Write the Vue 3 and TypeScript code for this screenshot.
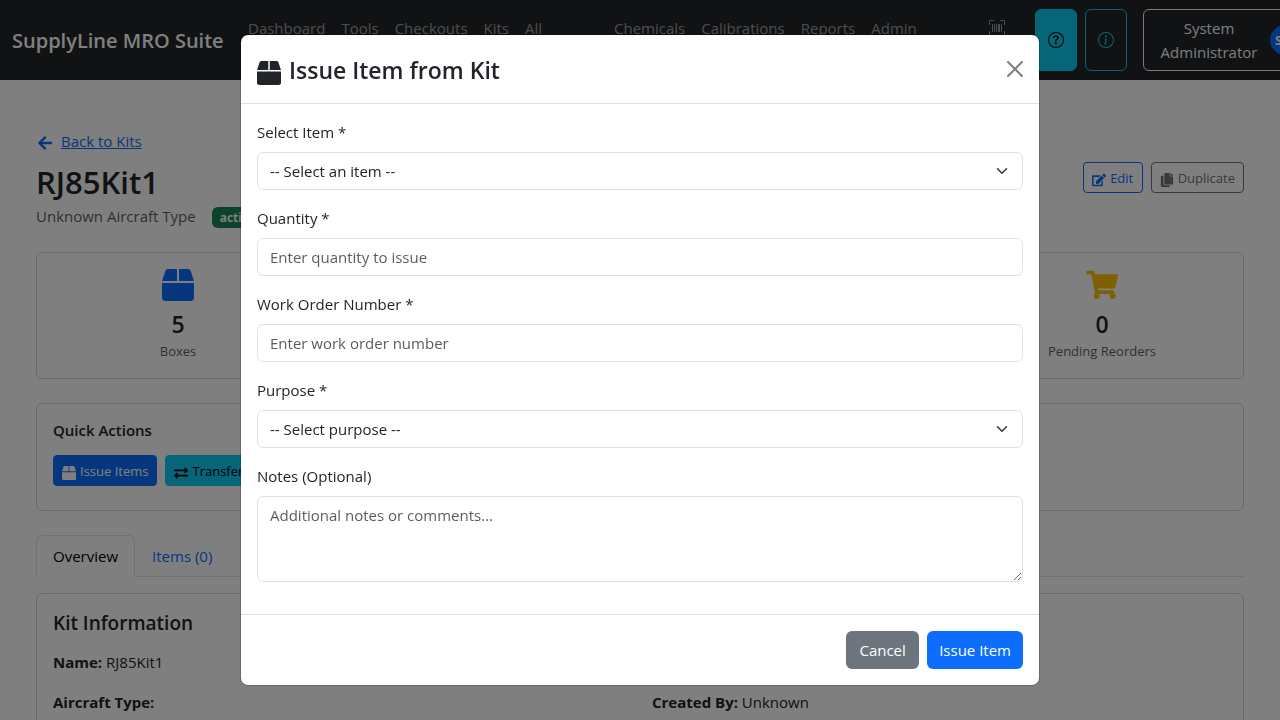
<script setup lang="ts">
import { ref } from 'vue'

interface Stat {
  value: number
  label: string
  icon: string
  box: string
  tone: string
}

const icons = {
  box: 'M509.5 184.6L458.9 32.8C452.4 13.2 434.1 0 413.4 0H272v192h238.7c-.4-2.5-.4-5-1.2-7.4zM240 0H98.6c-20.7 0-39 13.2-45.5 32.8L2.5 184.6c-.8 2.4-.8 4.9-1.2 7.4H240V0zM0 224v240c0 26.5 21.5 48 48 48h416c26.5 0 48-21.5 48-48V224H0z',
  arrow: 'M257.5 445.1l-22.2 22.2c-9.4 9.4-24.6 9.4-33.9 0L7 273c-9.4-9.4-9.4-24.6 0-33.9L201.4 44.7c9.4-9.4 24.6-9.4 33.9 0l22.2 22.2c9.5 9.5 9.3 25-.4 34.3L136.6 216H424c13.3 0 24 10.7 24 24v32c0 13.3-10.7 24-24 24H136.6l120.5 114.8c9.8 9.3 10 24.8.4 34.3z',
  edit: 'M402.6 83.2l90.2 90.2c3.8 3.8 3.8 10 0 13.8L274.4 405.6l-92.8 10.3c-12.4 1.4-22.9-9.1-21.5-21.5l10.3-92.8L388.8 83.2c3.8-3.8 10-3.8 13.8 0zm162-22.9l-48.8-48.8c-15.2-15.2-39.9-15.2-55.2 0l-35.4 35.4c-3.8 3.8-3.8 10 0 13.8l90.2 90.2c3.8 3.8 10 3.8 13.8 0l35.4-35.4c15.2-15.3 15.2-40 0-55.2zM384 346.2V448H64V128h229.8c3.2 0 6.2-1.3 8.5-3.5l40-40c7.6-7.6 2.2-20.5-8.5-20.5H48C21.5 64 0 85.5 0 112v352c0 26.5 21.5 48 48 48h352c26.5 0 48-21.5 48-48V306.2c0-10.7-12.9-16-20.5-8.5l-40 40c-2.2 2.3-3.5 5.3-3.5 8.5z',
  copy: 'M320 448v40c0 13.255-10.745 24-24 24H24c-13.255 0-24-10.745-24-24V120c0-13.255 10.745-24 24-24h72v296c0 30.879 25.121 56 56 56h168zm0-344V0H152c-13.255 0-24 10.745-24 24v368c0 13.255 10.745 24 24 24h272c13.255 0 24-10.745 24-24V128H344c-13.2 0-24-10.8-24-24zm120.971-31.029L375.029 7.029A24 24 0 0 0 358.059 0H352v96h96v-6.059a24 24 0 0 0-7.029-16.97z',
  cart: 'M528.12 301.319l47.273-208C578.806 78.301 567.391 64 551.99 64H159.208l-9.166-44.81C147.758 8.021 137.93 0 126.529 0H24C10.745 0 0 10.745 0 24v16c0 13.255 10.745 24 24 24h69.883l70.248 343.435C147.325 417.1 136 435.222 136 456c0 30.928 25.072 56 56 56s56-25.072 56-56c0-15.674-6.447-29.835-16.824-40h209.647C430.447 426.165 424 440.326 424 456c0 30.928 25.072 56 56 56s56-25.072 56-56c0-22.172-12.888-41.332-31.579-50.405l5.517-24.276c3.413-15.018-8.002-29.319-23.403-29.319H218.117l-6.545-32h293.145c11.206 0 20.92-7.754 23.403-18.681z',
  exchange: 'M0 168v-16c0-13.255 10.745-24 24-24h360V80c0-21.367 25.899-32.042 40.971-16.971l80 80c9.372 9.373 9.372 24.569 0 33.941l-80 80C409.956 271.982 384 261.456 384 240v-48H24c-13.255 0-24-10.745-24-24zm488 152H128v-48c0-21.314-25.862-32.08-40.971-16.971l-80 80c-9.372 9.373-9.372 24.569 0 33.941l80 80C102.057 463.997 128 453.437 128 432v-48h360c13.255 0 24-10.745 24-24v-16c0-13.255-10.745-24-24-24z',
  ring: 'M8 15A7 7 0 1 1 8 1a7 7 0 0 1 0 14m0 1A8 8 0 1 0 8 0a8 8 0 0 0 0 16',
  question: 'M5.255 5.786a.237.237 0 0 0 .241.247h.825c.138 0 .248-.113.266-.25.09-.656.54-1.134 1.342-1.134.686 0 1.314.343 1.314 1.168 0 .635-.374.927-.965 1.371-.673.489-1.206 1.06-1.168 1.987l.003.217a.25.25 0 0 0 .25.246h.811a.25.25 0 0 0 .25-.25v-.105c0-.718.273-.927 1.01-1.486.609-.463 1.244-.977 1.244-2.056 0-1.511-1.276-2.241-2.673-2.241-1.267 0-2.655.59-2.75 2.286m1.557 5.763c0 .533.425.927 1.01.927.609 0 1.028-.394 1.028-.927 0-.552-.42-.94-1.029-.94-.584 0-1.009.388-1.009.94',
  info: 'm8.93 6.588-2.29.287-.082.38.45.083c.294.07.352.176.288.469l-.738 3.468c-.194.897.105 1.319.808 1.319.545 0 1.178-.252 1.465-.598l.088-.416c-.2.176-.492.246-.686.246-.275 0-.375-.193-.304-.533zM9 4.5a1 1 0 1 1-2 0 1 1 0 0 1 2 0',
  scan: 'M1.5 1a.5.5 0 0 0-.5.5v3a.5.5 0 0 1-1 0v-3A1.5 1.5 0 0 1 1.5 0h3a.5.5 0 0 1 0 1zM11 .5a.5.5 0 0 1 .5-.5h3A1.5 1.5 0 0 1 16 1.5v3a.5.5 0 0 1-1 0v-3a.5.5 0 0 0-.5-.5h-3a.5.5 0 0 1-.5-.5M.5 11a.5.5 0 0 1 .5.5v3a.5.5 0 0 0 .5.5h3a.5.5 0 0 1 0 1h-3A1.5 1.5 0 0 1 0 14.5v-3a.5.5 0 0 1 .5-.5m15 0a.5.5 0 0 1 .5.5v3a1.5 1.5 0 0 1-1.5 1.5h-3a.5.5 0 0 1 0-1h3a.5.5 0 0 0 .5-.5v-3a.5.5 0 0 1 .5-.5M3 4.5a.5.5 0 0 1 1 0v7a.5.5 0 0 1-1 0zm2 0a.5.5 0 0 1 1 0v7a.5.5 0 0 1-1 0zm2 0a.5.5 0 0 1 1 0v7a.5.5 0 0 1-1 0zm2 0a.5.5 0 0 1 .5-.5h1a.5.5 0 0 1 .5.5v7a.5.5 0 0 1-.5.5h-1a.5.5 0 0 1-.5-.5zm3 0a.5.5 0 0 1 1 0v7a.5.5 0 0 1-1 0z',
  close: 'M.293.293a1 1 0 0 1 1.414 0L8 6.586 14.293.293a1 1 0 1 1 1.414 1.414L9.414 8l6.293 6.293a1 1 0 0 1-1.414 1.414L8 9.414l-6.293 6.293a1 1 0 0 1-1.414-1.414L6.586 8 .293 1.707a1 1 0 0 1 0-1.414z',
}

const links = ['Dashboard', 'Tools', 'Checkouts', 'Kits', 'All', 'Chemicals', 'Calibrations', 'Reports', 'Admin']

const stats: Stat[] = [
  { value: 5, label: 'Boxes', icon: icons.box, box: '0 0 512 512', tone: 'blue' },
  { value: 0, label: 'Pending Reorders', icon: icons.cart, box: '0 0 576 512', tone: 'amber' },
]

const item = ref('')
const quantity = ref('')
const workOrder = ref('')
const purpose = ref('')
const notes = ref('')
</script>

<template>
  <div class="page">
    <header class="navbar">
      <a class="brand" href="#">SupplyLine MRO Suite</a>
      <nav class="links">
        <a v-for="link in links" :key="link" href="#" :class="{ wide: link === 'All' }">{{ link }}</a>
      </nav>
      <a class="scan" href="#" aria-label="Scan">
        <svg viewBox="0 0 16 16" width="16" height="16"><path :d="icons.scan" /></svg>
      </a>
      <div class="tools">
        <button class="square filled" type="button" aria-label="Help">
          <svg viewBox="0 0 16 16" width="16" height="16"><path :d="icons.ring" /><path :d="icons.question" /></svg>
        </button>
        <button class="square" type="button" aria-label="About">
          <svg viewBox="0 0 16 16" width="16" height="16"><path :d="icons.ring" /><path :d="icons.info" /></svg>
        </button>
        <button class="user" type="button">
          <span class="user-name">System Administrator</span>
          <span class="avatar">S</span>
        </button>
      </div>
    </header>

    <main class="content">
      <section class="head">
        <div>
          <div class="back">
            <svg viewBox="0 0 448 512" width="16" height="16"><path :d="icons.arrow" /></svg>
            <a href="#">Back to Kits</a>
          </div>
          <h1>RJ85Kit1</h1>
          <div class="meta">
            <span>Unknown Aircraft Type</span>
            <span class="badge">active</span>
          </div>
        </div>
        <div class="head-actions">
          <button class="small outline-blue" type="button">
            <svg viewBox="0 0 576 512" width="14" height="14"><path :d="icons.edit" /></svg>Edit
          </button>
          <button class="small outline-grey" type="button">
            <svg viewBox="0 0 448 512" width="14" height="14"><path :d="icons.copy" /></svg>Duplicate
          </button>
        </div>
      </section>

      <section class="stats">
        <article v-for="stat in stats" :key="stat.label" class="card stat">
          <svg :class="stat.tone" :viewBox="stat.box" width="32" height="32"><path :d="stat.icon" /></svg>
          <strong>{{ stat.value }}</strong>
          <span>{{ stat.label }}</span>
        </article>
      </section>

      <section class="card actions">
        <h2>Quick Actions</h2>
        <div class="row">
          <button class="small solid-blue" type="button">
            <svg viewBox="0 0 512 512" width="14" height="14"><path :d="icons.box" /></svg>Issue Items
          </button>
          <button class="small solid-cyan" type="button">
            <svg viewBox="0 0 512 512" width="14" height="14"><path :d="icons.exchange" /></svg>Transfer
          </button>
        </div>
      </section>

      <div class="tabs">
        <button class="tab active" type="button">Overview</button>
        <button class="tab" type="button">Items (0)</button>
      </div>

      <section class="card details">
        <h2>Kit Information</h2>
        <div class="columns">
          <p><b>Name:</b> RJ85Kit1</p>
          <p></p>
          <p><b>Aircraft Type:</b></p>
          <p><b>Created By:</b> Unknown</p>
        </div>
      </section>
    </main>

    <div class="backdrop">
      <form class="modal" role="dialog" aria-labelledby="title" @submit.prevent>
        <div class="modal-head">
          <svg viewBox="0 0 512 512" width="24" height="24"><path :d="icons.box" /></svg>
          <h3 id="title">Issue Item from Kit</h3>
          <button class="close" type="button" aria-label="Close">
            <svg viewBox="0 0 16 16" width="16" height="16"><path :d="icons.close" /></svg>
          </button>
        </div>
        <div class="modal-body">
          <div class="field">
            <label for="item">Select Item *</label>
            <select id="item" v-model="item" class="control">
              <option value="">-- Select an item --</option>
            </select>
          </div>
          <div class="field">
            <label for="quantity">Quantity *</label>
            <input id="quantity" v-model="quantity" class="control" type="text" placeholder="Enter quantity to issue" />
          </div>
          <div class="field">
            <label for="order">Work Order Number *</label>
            <input id="order" v-model="workOrder" class="control" type="text" placeholder="Enter work order number" />
          </div>
          <div class="field">
            <label for="purpose">Purpose *</label>
            <select id="purpose" v-model="purpose" class="control">
              <option value="">-- Select purpose --</option>
            </select>
          </div>
          <div class="field">
            <label for="notes">Notes (Optional)</label>
            <textarea id="notes" v-model="notes" class="control" rows="3" placeholder="Additional notes or comments..."></textarea>
          </div>
        </div>
        <div class="modal-foot">
          <button class="big grey" type="button">Cancel</button>
          <button class="big" type="submit">Issue Item</button>
        </div>
      </form>
    </div>
  </div>
</template>

<style>
html,
body {
  height: 100%;
  overflow: hidden;
}
</style>

<style scoped>
.page,
.page * {
  box-sizing: border-box;
}
.page {
  height: 100vh;
  overflow: hidden;
  background: #fff;
  color: #212529;
  font-family: 'Segoe UI', 'Open Sans', 'Noto Sans', sans-serif;
  font-size: 15px;
  line-height: 24px;
}
button,
input,
select,
textarea {
  font: inherit;
}
h1,
h2,
h3,
p {
  margin: 0;
}
svg {
  fill: currentColor;
  flex: none;
}

.navbar {
  display: flex;
  align-items: center;
  height: 80px;
  padding-left: 12px;
  background: #212529;
  white-space: nowrap;
}
.brand {
  flex: none;
  width: 228px;
  padding-top: 1px;
  color: #fff;
  font-size: 20px;
  font-weight: 600;
  line-height: 30px;
  text-decoration: none;
}
.links {
  display: flex;
  flex: none;
  align-self: stretch;
  padding-top: 8px;
}
.links a {
  padding: 8px;
  color: rgba(255, 255, 255, 0.55);
  text-decoration: none;
}
.links .wide {
  width: 89px;
}
.scan {
  align-self: flex-start;
  margin: 20px 30px 0 auto;
  color: rgba(255, 255, 255, 0.55);
}
.scan svg {
  display: block;
}
.tools {
  display: flex;
  flex: none;
  gap: 8px;
  width: 245px;
}
.tools button {
  flex: none;
  display: flex;
  align-items: center;
  justify-content: center;
  height: 62px;
  border: 1px solid #0dcaf0;
  border-radius: 6px;
  background: transparent;
}
.tools .square {
  width: 42px;
  padding: 0;
  color: #0dcaf0;
}
.tools .filled {
  background: #0dcaf0;
  color: #000;
}
.tools .user {
  gap: 8px;
  margin-left: 8px;
  padding: 0 12px;
  border-color: #f8f9fa;
  color: #f8f9fa;
}
.user-name {
  width: 106px;
  white-space: normal;
}
.avatar {
  width: 30px;
  height: 30px;
  padding-left: 5px;
  border-radius: 50%;
  background: #0d6efd;
  color: #fff;
  font-size: 13px;
  font-weight: 700;
  line-height: 30px;
  text-align: left;
}

.content {
  padding: 49px 36px 0;
}
.head {
  display: flex;
  align-items: center;
  justify-content: space-between;
  height: 99px;
}
.back {
  display: flex;
  align-items: center;
  gap: 8px;
  color: #0d6efd;
}
.back svg {
  margin: 3px 0 0 1px;
}
.back a {
  color: #0d6efd;
}
h1 {
  margin: 10px 0 3px;
  font-size: 31px;
  font-weight: 600;
  line-height: 38px;
}
.meta {
  display: flex;
  align-items: center;
  gap: 16px;
  color: rgba(33, 37, 41, 0.75);
}
.badge {
  margin-top: 2px;
  padding: 0 8px;
  border-radius: 6px;
  background: #198754;
  color: #fff;
  font-size: 12px;
  font-weight: 700;
  line-height: 21px;
}
.head-actions {
  display: flex;
  gap: 8px;
  padding-bottom: 2px;
}
.small {
  display: flex;
  align-items: center;
  justify-content: center;
  gap: 4px;
  min-width: 60px;
  height: 31px;
  padding: 0 8px;
  border: 1px solid;
  border-radius: 4px;
  background: transparent;
  font-size: 13px;
}
.small svg {
  margin-top: 5px;
}
.outline-blue {
  color: #0d6efd;
}
.outline-grey {
  color: #6c757d;
}
.solid-blue {
  border-color: #0d6efd;
  background: #0d6efd;
  color: #fff;
}
.solid-cyan {
  border-color: #0dcaf0;
  background: #0dcaf0;
  color: #000;
}
.card {
  border: 1px solid rgba(0, 0, 0, 0.175);
  border-radius: 6px;
  padding: 16px;
}
.stats {
  display: grid;
  grid-template-columns: repeat(4, 1fr);
  column-gap: 24px;
  margin: 24px 0;
}
.stat {
  display: flex;
  flex-direction: column;
  align-items: center;
  height: 127px;
}
.stat:last-child {
  grid-column: 4;
}
.stat strong {
  margin: 8px 0 2px;
  font-size: 23px;
  font-weight: 600;
  line-height: 30px;
}
.stat span {
  color: rgba(33, 37, 41, 0.75);
  font-size: 13px;
  line-height: 21px;
}
.blue {
  color: #0d6efd;
}
.amber {
  color: #ffc107;
}
.actions h2 {
  margin-bottom: 14px;
  font-size: 15px;
  font-weight: 600;
  line-height: 21px;
}
.row {
  display: flex;
  gap: 8px;
  padding-bottom: 8px;
}
.tabs {
  display: flex;
  margin: 24px 0 16px;
  border-bottom: 1px solid #dee2e6;
}
.tab {
  height: 42px;
  margin-bottom: -1px;
  padding: 0 16px;
  border: 1px solid transparent;
  border-radius: 6px 6px 0 0;
  background: transparent;
  color: #0d6efd;
}
.tab.active {
  border-color: #dee2e6 #dee2e6 #fff;
  background: #fff;
  color: #000;
}
.details h2 {
  margin-bottom: 14px;
  font-size: 19px;
  font-weight: 600;
  line-height: 26px;
}
.columns {
  display: grid;
  grid-template-columns: 1fr 1fr;
  gap: 16px 24px;
}

.backdrop {
  position: fixed;
  inset: 0;
  display: flex;
  align-items: center;
  justify-content: center;
  background: rgba(0, 0, 0, 0.5);
}
.modal {
  width: 100%;
  max-width: 800px;
  border: 1px solid rgba(0, 0, 0, 0.175);
  border-radius: 8px;
  background: #fff;
  background-clip: padding-box;
}
.modal-head {
  display: flex;
  align-items: center;
  gap: 8px;
  padding: 16px;
  border-bottom: 1px solid #dee2e6;
}
.modal-head h3 {
  flex: 1;
  padding-top: 2px;
  font-size: 23px;
  font-weight: 600;
  line-height: 34px;
}
.modal-head > svg {
  margin-top: 8px;
}
.close {
  display: flex;
  padding: 0;
  border: 0;
  background: transparent;
  color: #000;
  opacity: 0.5;
}
.modal-body {
  display: grid;
  gap: 16px;
  padding: 16px 16px 32px;
}
.field {
  display: grid;
  gap: 8px;
}
.control {
  display: block;
  width: 100%;
  height: 38px;
  padding: 6px 12px;
  border: 1px solid #dee2e6;
  border-radius: 6px;
  background-color: #fff;
  color: #212529;
  outline: none;
}
.control::placeholder {
  color: rgba(33, 37, 41, 0.75);
}
select.control {
  appearance: none;
  background-image: url("data:image/svg+xml,%3csvg xmlns='http://www.w3.org/2000/svg' viewBox='0 0 16 16'%3e%3cpath fill='none' stroke='%23343a40' stroke-linecap='round' stroke-linejoin='round' stroke-width='2' d='m2 5 6 6 6-6'/%3e%3c/svg%3e");
  background-repeat: no-repeat;
  background-position: right 12px center;
  background-size: 16px 12px;
}
textarea.control {
  height: 86px;
  resize: vertical;
}
.modal-foot {
  display: flex;
  justify-content: flex-end;
  gap: 8px;
  padding: 16px;
  border-top: 1px solid #dee2e6;
}
.big {
  height: 38px;
  min-width: 73px;
  padding: 0 12px;
  border: 0;
  border-radius: 6px;
  background: #0d6efd;
  color: #fff;
}
.grey {
  background: #6c757d;
}
</style>
